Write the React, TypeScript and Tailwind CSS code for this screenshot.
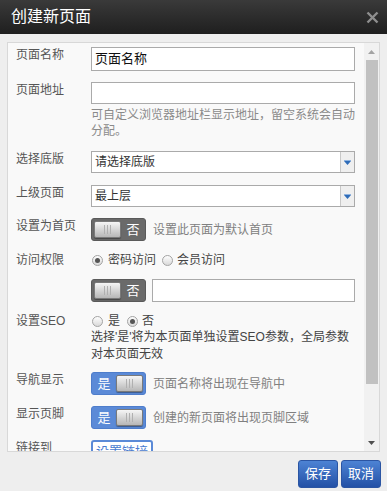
import React from "react";

const Knob = () => (
  <div className="w-[27px] h-[17px] shrink-0 rounded-[2px] border border-[#7a7a7a] bg-linear-to-b from-[#f6f6f6] to-[#b7b7b7] flex items-center justify-center gap-[2px] shadow-[0_1px_1px_rgba(0,0,0,0.35)]">
    <span className="w-px h-[9px] bg-[#b0b0b0]" />
    <span className="w-px h-[9px] bg-[#b0b0b0]" />
    <span className="w-px h-[9px] bg-[#b0b0b0]" />
  </div>
);

function Toggle({ on }: { on: boolean }) {
  if (on) {
    return (
      <div className="w-[55px] h-[23px] shrink-0 rounded-[3px] bg-[#5b8ad7] border border-[#4e7dcb] flex items-center pr-[2px]">
        <span className="flex-1 text-center text-white text-[13px] leading-none">是</span>
        <Knob />
      </div>
    );
  }
  return (
    <div className="w-[55px] h-[23px] shrink-0 rounded-[3px] bg-[#6a6a6a] border border-[#5a5a5a] flex items-center pl-[2px]">
      <Knob />
      <span className="flex-1 text-center text-white text-[13px] leading-none">否</span>
    </div>
  );
}

function Radio({ checked }: { checked?: boolean }) {
  return (
    <span className="w-[11px] h-[11px] shrink-0 rounded-full border border-[#a3a3a3] bg-linear-to-b from-[#fefefe] to-[#d9d9d9] flex items-center justify-center">
      {checked && <span className="w-[5px] h-[5px] rounded-full bg-[#555]" />}
    </span>
  );
}

function Row({
  label,
  children,
  className,
}: {
  label: string;
  children: React.ReactNode;
  className: string;
}) {
  return (
    <div className={"flex " + className}>
      <div className="w-[75px] shrink-0 text-[12px] leading-[16px] text-[#555]">{label}</div>
      <div className="w-[264px] shrink-0">{children}</div>
    </div>
  );
}

function SelectBox({ text, className }: { text: string; className: string }) {
  return (
    <div className={"h-[22px] w-full border border-[#aaa] bg-white flex items-stretch " + className}>
      <div className="flex-1 pl-[3px] text-[12px] text-[#333] flex items-center">{text}</div>
      <div className="w-[14px] bg-[#efefef] border-l border-[#c8c8c8] flex items-center justify-center">
        <svg width="7" height="5" viewBox="0 0 7 5">
          <rect x="0" y="0" width="7" height="1" fill="#8fb3e0" />
          <polygon points="0,1 7,1 3.5,5" fill="#2f6cb8" />
        </svg>
      </div>
    </div>
  );
}

export default function App() {
  return (
    <div className="w-[387px] h-[491px] bg-[#eeeeee] flex flex-col overflow-hidden [font-family:'Liberation_Sans','Noto_Sans_CJK_SC',sans-serif]">
      {/* header */}
      <div className="h-[34px] shrink-0 bg-linear-to-b from-[#3a3a3a] to-[#1f1f1f] flex items-center justify-between pl-[11px] pr-[8px]">
        <span className="text-white text-[16px] leading-none">创建新页面</span>
        <svg width="13" height="13" viewBox="0 0 13 13">
          <path d="M1.5 1.5 L11.5 11.5 M11.5 1.5 L1.5 11.5" stroke="#8e8e8e" strokeWidth="2.4" />
        </svg>
      </div>

      {/* panel */}
      <div className="mt-[8px] ml-[7px] w-[373px] h-[410px] shrink-0 border border-[#d8d8d8] bg-[#f9f9f9] flex overflow-hidden">
        <div className="flex-1 pl-[8px] pt-[4px] overflow-hidden">
          <Row label="页面名称" className="mb-[11px]">
            <div className="h-[24px] w-full border border-[#aaa] bg-white pl-[3px] flex items-center text-[13px] text-[#111]">
              页面名称
            </div>
          </Row>
          <Row label="页面地址" className="mb-[12px]">
            <div className="h-[22px] w-full border border-[#aaa] bg-white" />
            <div className="mt-[3px] text-[12px] leading-[16px] text-[#8a8a8a]">
              可自定义浏览器地址栏显示地址，留空系统会自动分配。
            </div>
          </Row>
          <Row label="选择底版" className="mb-[12px]">
            <SelectBox text="请选择底版" className="" />
          </Row>
          <Row label="上级页面" className="mb-[11px]">
            <SelectBox text="最上层" className="" />
          </Row>
          <Row label="设置为首页" className="mb-[11px]">
            <div className="flex items-center">
              <Toggle on={false} />
              <span className="ml-[7px] text-[12px] text-[#808080]">设置此页面为默认首页</span>
            </div>
          </Row>
          <Row label="访问权限" className="mb-[11px]">
            <div className="h-[16px] flex items-center text-[12px] text-[#444] pl-[1px]">
              <Radio checked />
              <span className="ml-[5px]">密码访问</span>
              <span className="ml-[6px]">
                <Radio />
              </span>
              <span className="ml-[4px]">会员访问</span>
            </div>
          </Row>
          <Row label="" className="mb-[11px]">
            <div className="flex items-center">
              <Toggle on={false} />
              <div className="ml-[6px] flex-1 h-[23px] border border-[#aaa] bg-white" />
            </div>
          </Row>
          <Row label="设置SEO" className="mb-[9px]">
            <div className="h-[16px] flex items-center text-[12px] text-[#444] pl-[1px]">
              <Radio />
              <span className="ml-[5px]">是</span>
              <span className="ml-[7px]">
                <Radio checked />
              </span>
              <span className="ml-[4px]">否</span>
            </div>
            <div className="text-[12px] leading-[17px] text-[#444]">
              选择'是'将为本页面单独设置SEO参数，全局参数对本页面无效
            </div>
          </Row>
          <Row label="导航显示" className="mb-[11px]">
            <div className="flex items-center">
              <Toggle on />
              <span className="ml-[7px] text-[12px] text-[#808080]">页面名称将出现在导航中</span>
            </div>
          </Row>
          <Row label="显示页脚" className="mb-[11px]">
            <div className="flex items-center">
              <Toggle on />
              <span className="ml-[7px] text-[12px] text-[#808080]">创建的新页面将出现页脚区域</span>
            </div>
          </Row>
          <Row label="链接到" className="">
            <div className="w-[62px] h-[24px] rounded-[3px] border-[2px] border-[#5b8ad7] bg-white flex items-center justify-center text-[13px] text-[#4a7bd0]">
              设置链接
            </div>
          </Row>
        </div>

        {/* scrollbar */}
        <div className="w-[15px] shrink-0 bg-[#f1f1f1] flex flex-col">
          <div className="h-[17px] flex items-center justify-center">
            <svg width="7" height="4" viewBox="0 0 7 4">
              <polygon points="0,4 7,4 3.5,0" fill="#a3a3a3" />
            </svg>
          </div>
          <div className="ml-[2px] w-[12px] h-[324px] bg-[#c1c1c1]" />
          <div className="flex-1" />
          <div className="h-[17px] flex items-center justify-center">
            <svg width="7" height="4" viewBox="0 0 7 4">
              <polygon points="0,0 7,0 3.5,4" fill="#505050" />
            </svg>
          </div>
        </div>
      </div>

      {/* footer */}
      <div className="mt-[8px] flex justify-end gap-[3px] pr-[6px]">
        <button className="w-[40px] h-[28px] rounded-[3px] border border-[#2b55a3] bg-linear-to-b from-[#4d83d4] to-[#2451a6] text-white text-[13px]">
          保存
        </button>
        <button className="w-[40px] h-[28px] rounded-[3px] border border-[#2b55a3] bg-linear-to-b from-[#4d83d4] to-[#2451a6] text-white text-[13px]">
          取消
        </button>
      </div>
    </div>
  );
}
